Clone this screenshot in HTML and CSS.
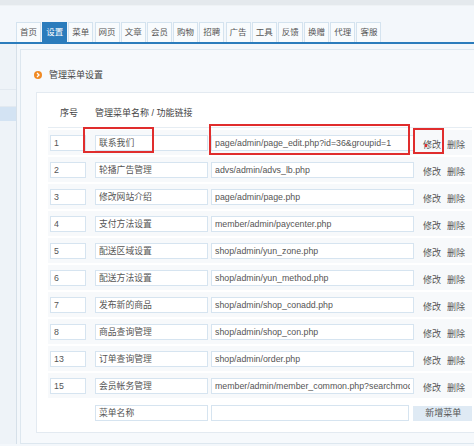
FILE: index.html
```html
<!DOCTYPE html>
<html lang="zh-CN">
<head>
<meta charset="utf-8">
<title>管理菜单设置</title>
<link rel="stylesheet" href="styles.css">
</head>
<body>
<div class="top"></div>
<div class="tabbar">
  <span class="tab">首页</span>
  <span class="tab active">设置</span>
  <span class="tab">菜单</span>
  <span class="tab">网页</span>
  <span class="tab">文章</span>
  <span class="tab">会员</span>
  <span class="tab">购物</span>
  <span class="tab">招聘</span>
  <span class="tab">广告</span>
  <span class="tab">工具</span>
  <span class="tab">反馈</span>
  <span class="tab">换赠</span>
  <span class="tab">代理</span>
  <span class="tab">客服</span>
</div>
<div class="main">
  <div class="sidebar">
    <div class="side-item"></div>
    <div class="side-item"></div>
    <div class="side-item current"></div>
  </div>
  <div class="panel">
    <div class="panel-title">
      <span class="dot"><svg width="8" height="8" viewBox="0 0 8 8"><path d="M3 2 L5 4 L3 6" fill="none" stroke="#fff" stroke-width="1.3"/></svg></span>
      <span>管理菜单设置</span>
    </div>
    <div class="inner">
      <div class="head">
        <span class="h-no">序号</span>
        <span class="h-name">管理菜单名称 / 功能链接</span>
      </div>
      <div class="row">
        <input class="in-no" value="1">
        <input class="in-name" value="联系我们">
        <input class="in-link" value="page/admin/page_edit.php?id=36&amp;groupid=1">
        <span class="act">修改</span><span class="act">删除</span>
        <span class="mark m-name"></span>
        <span class="mark m-link"></span>
        <span class="mark m-edit"></span>
        <span class="reddot"></span>
      </div>
      <div class="row">
        <input class="in-no" value="2">
        <input class="in-name" value="轮播广告管理">
        <input class="in-link" value="advs/admin/advs_lb.php">
        <span class="act">修改</span><span class="act">删除</span>
      </div>
      <div class="row">
        <input class="in-no" value="3">
        <input class="in-name" value="修改网站介绍">
        <input class="in-link" value="page/admin/page.php">
        <span class="act">修改</span><span class="act">删除</span>
      </div>
      <div class="row">
        <input class="in-no" value="4">
        <input class="in-name" value="支付方法设置">
        <input class="in-link" value="member/admin/paycenter.php">
        <span class="act">修改</span><span class="act">删除</span>
      </div>
      <div class="row">
        <input class="in-no" value="5">
        <input class="in-name" value="配送区域设置">
        <input class="in-link" value="shop/admin/yun_zone.php">
        <span class="act">修改</span><span class="act">删除</span>
      </div>
      <div class="row">
        <input class="in-no" value="6">
        <input class="in-name" value="配送方法设置">
        <input class="in-link" value="shop/admin/yun_method.php">
        <span class="act">修改</span><span class="act">删除</span>
      </div>
      <div class="row">
        <input class="in-no" value="7">
        <input class="in-name" value="发布新的商品">
        <input class="in-link" value="shop/admin/shop_conadd.php">
        <span class="act">修改</span><span class="act">删除</span>
      </div>
      <div class="row">
        <input class="in-no" value="8">
        <input class="in-name" value="商品查询管理">
        <input class="in-link" value="shop/admin/shop_con.php">
        <span class="act">修改</span><span class="act">删除</span>
      </div>
      <div class="row">
        <input class="in-no" value="13">
        <input class="in-name" value="订单查询管理">
        <input class="in-link" value="shop/admin/order.php">
        <span class="act">修改</span><span class="act">删除</span>
      </div>
      <div class="row">
        <input class="in-no" value="15">
        <input class="in-name" value="会员帐务管理">
        <input class="in-link" value="member/admin/member_common.php?searchmode=1">
        <span class="act">修改</span><span class="act">删除</span>
      </div>
      <div class="row new">
        <span class="no-space"></span>
        <input class="in-name" value="菜单名称">
        <input class="in-link" value="">
        <span class="btn">新增菜单</span>
      </div>
    </div>
  </div>
</div>
</body>
</html>
```

FILE: styles.css
```css
* { box-sizing: border-box; }
html, body { margin: 0; padding: 0; }
body {
  width: 474px;
  height: 446px;
  overflow: hidden;
  background: #f3f7fb;
  font-family: "Liberation Sans", "Noto Sans CJK SC", sans-serif;
  font-size: 9px;
  color: #333;
}
.top { height: 6px; background: #e4e9ed; border-bottom: 1px solid #eef2f5; }
.tabbar {
  margin-top: 16px;
  padding-left: 16px;
  display: flex;
  gap: 1.2px;
  height: 22px;
  border-bottom: 2px solid #2b7cbc;
}
.tab {
  width: 25px;
  height: 20px;
  border: 1px solid #d4e3ef;
  border-bottom: none;
  background: #f8fbfd;
  color: #555;
  font-size: 8.5px;
  line-height: 19px;
  text-align: center;
  white-space: nowrap;
}
.tab.active { background: #2b7cbc; border-color: #2b7cbc; color: #fff; }
.main { display: flex; height: 400px; }
.sidebar {
  width: 17px;
  flex: none;
  border-right: 1px solid #d6e0e9;
  background: #eef3f8;
  padding-top: 29px;
}
.side-item { height: 17px; border-bottom: 1px solid #e2e9f0; }
.side-item.current { height: 14px; background: #d3e3f3; border-bottom: none; }
.panel {
  margin-left: 3px;
  margin-top: 5px;
  width: 470px;
  flex: none;
  border: 1px solid #dde7ef;
  background: #f6f9fc;
  padding-bottom: 11px;
}
.panel-title {
  display: flex;
  align-items: center;
  gap: 7px;
  padding: 19px 0 0 13px;
  height: 31px;
  line-height: 12px;
  color: #444;
}
.dot {
  width: 8px; height: 8px;
  border-radius: 50%;
  background: #f08a24;
  display: flex;
}
.inner {
  margin: 11px 0 0 15px;
  border: 1px solid #e3eaf1;
  background: #fff;
  padding: 0 0 7px 11px;
}
.head {
  display: flex;
  width: 424px;
  padding: 14px 0 8px 0;
  line-height: 12px;
  border-bottom: 1px solid #e6edf3;
  color: #444;
}
.h-no { width: 47px; padding-left: 12px; }
.row {
  position: relative;
  display: flex;
  align-items: center;
  width: 424px;
  height: 25px;
  margin-top: 2px;
  padding-left: 2px;
  background: #f7f9fb;
}
.row input {
  height: 16px;
  border: 1px solid #d6e4f0;
  background: #fff;
  font-family: "Liberation Sans", "Noto Sans CJK SC", sans-serif;
  font-size: 8.8px;
  color: #555;
  padding: 0 3px;
  margin: 0;
  outline: none;
}
.in-no { width: 36px; }
.in-name { width: 113px; margin-left: 9px !important; }
.in-link { width: 203px; margin-left: 3px !important; }
.no-space { width: 36px; flex: none; }
.act { color: #555; margin-left: 9px; padding-top: 3px; }
.act + .act { margin-left: 6px; }
.row.new { background: #fff; }
.btn {
  margin-left: 4px;
  height: 15px;
  width: 60px;
  background: #dfeaf4;
  color: #555;
  line-height: 15px;
  padding-left: 12px;
  margin-top: 2px;
}
.mark { position: absolute; border: 2px solid #e02d2d; }
.m-name { left: 35px; top: -3px; width: 71px; height: 26px; }
.m-link { left: 161px; top: -6px; width: 201px; height: 31px; }
.m-edit { left: 365px; top: -2px; width: 31px; height: 26px; }
.reddot { position: absolute; left: 377px; top: 14px; width: 2px; height: 3px; background: #e02d2d; }
```
